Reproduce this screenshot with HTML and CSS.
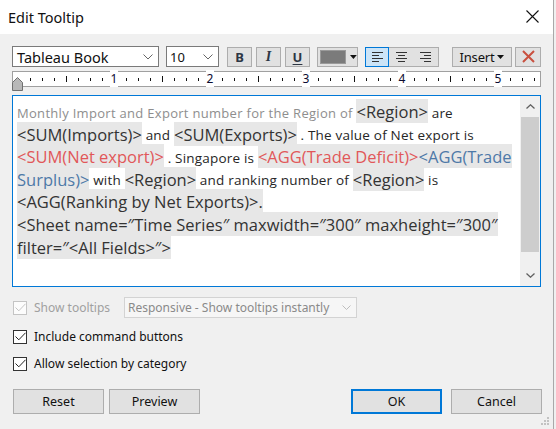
FILE: index.html
```html
<!DOCTYPE html>
<html>
<head>
<meta charset="utf-8">
<link rel="stylesheet" href="styles.css">
</head>
<body>
<div class="window">
  <header class="titlebar">
    <span class="title">Edit Tooltip</span>
    <svg class="close" width="13" height="13" viewBox="0 0 13 13"><path d="M0.5 0.5L12.5 12.5M12.5 0.5L0.5 12.5" stroke="#111" stroke-width="1.1" fill="none"/></svg>
  </header>
  <main class="content">
    <div class="toolbar">
      <div class="select font-select"><span>Tableau Book</span><svg width="10" height="6" viewBox="0 0 10 6"><path d="M0.5 0.5L5 5L9.5 0.5" stroke="#666" fill="none"/></svg></div>
      <div class="select size-select"><span>10</span><svg width="10" height="6" viewBox="0 0 10 6"><path d="M0.5 0.5L5 5L9.5 0.5" stroke="#666" fill="none"/></svg></div>
      <div class="btn fmt bold">B</div>
      <div class="btn fmt ital">I</div>
      <div class="btn fmt under">U</div>
      <div class="btn colorbtn"><span class="swatch"></span><svg width="7" height="4" viewBox="0 0 7 4"><path d="M0 0H7L3.5 4Z" fill="#111"/></svg></div>
      <div class="align-group">
        <div class="al active"><svg width="11" height="10" viewBox="0 0 11 10"><path d="M0 0.5H11M0 3.5H7M0 6.5H11M0 9.5H7" stroke="#333"/></svg></div>
        <div class="al"><svg width="11" height="10" viewBox="0 0 11 10"><path d="M0 0.5H11M2 3.5H9M0 6.5H11M2 9.5H9" stroke="#333"/></svg></div>
        <div class="al"><svg width="11" height="10" viewBox="0 0 11 10"><path d="M0 0.5H11M4 3.5H11M0 6.5H11M4 9.5H11" stroke="#333"/></svg></div>
      </div>
      <div class="btn insert"><span>Insert</span><svg width="7" height="4" viewBox="0 0 7 4"><path d="M0 0H7L3.5 4Z" fill="#111"/></svg></div>
      <div class="btn clear"><svg width="13" height="13" viewBox="0 0 13 13"><path d="M1 1L12 12M12 1L1 12" stroke="#c9503f" stroke-width="2" fill="none"/></svg></div>
    </div>
    <div class="ruler">
      <span class="num"><i>1</i></span><span class="num"><i>2</i></span><span class="num"><i>3</i></span><span class="num"><i>4</i></span><span class="num"><i>5</i></span>
      <svg class="rthumb" width="11" height="14" viewBox="0 0 11 14"><path d="M0.5 5.5L5.5 0.5L10.5 5.5V13.5H0.5Z" fill="#b8b8b8" stroke="#707070"/></svg>
    </div>
    <div class="editor">
      <p class="tt"><span class="g">Monthly Import and Export number for the Region of </span><span class="f">&lt;Region&gt;</span><span class="n"> are</span><br><span class="f">&lt;SUM(Imports)&gt;</span><span class="n"> and </span><span class="f">&lt;SUM(Exports)&gt;</span><span class="n"> . The value of Net export is</span><br><span class="f red">&lt;SUM(Net export)&gt;</span><span class="n"> . Singapore is </span><span class="f red">&lt;AGG(Trade Deficit)&gt;</span><span class="f blue">&lt;AGG(Trade<br>Surplus)&gt;</span><span class="n"> with </span><span class="f">&lt;Region&gt;</span><span class="n"> and ranking number of </span><span class="f">&lt;Region&gt;</span><span class="n"> is</span><br><span class="f">&lt;AGG(Ranking by Net Exports)&gt;.</span><br><span class="f">&lt;Sheet name=″Time Series″ maxwidth=″300″ maxheight=″300″<br>filter=″&lt;All Fields&gt;″&gt;</span></p>
      <div class="scrollbar">
        <div class="sarrow"><svg width="9" height="5" viewBox="0 0 9 5"><path d="M0.5 4.5L4.5 0.8L8.5 4.5" stroke="#606060" stroke-width="1.3" fill="none"/></svg></div>
        <div class="sthumb"></div>
        <div class="strack"></div>
        <div class="sarrow"><svg width="9" height="5" viewBox="0 0 9 5"><path d="M0.5 0.5L4.5 4.2L8.5 0.5" stroke="#606060" stroke-width="1.3" fill="none"/></svg></div>
      </div>
    </div>
    <div class="opt-row show-row">
      <span class="cb disabled"><svg width="11" height="9" viewBox="0 0 11 9"><path d="M0.5 4.5L3.8 7.8L10.5 0.8" stroke="#c4c4c4" fill="none"/></svg></span>
      <span class="label disabled-label">Show tooltips</span>
      <div class="dd"><span>Responsive - Show tooltips instantly</span><svg width="9" height="5" viewBox="0 0 9 5"><path d="M0.5 0.5L4.5 4.5L8.5 0.5" stroke="#bdbdbd" fill="none"/></svg></div>
    </div>
    <div class="opt-row include-row">
      <span class="cb"><svg width="11" height="9" viewBox="0 0 11 9"><path d="M0.5 4.5L3.8 7.8L10.5 0.8" stroke="#222" fill="none"/></svg></span>
      <span class="label">Include command buttons</span>
    </div>
    <div class="opt-row allow-row">
      <span class="cb"><svg width="11" height="9" viewBox="0 0 11 9"><path d="M0.5 4.5L3.8 7.8L10.5 0.8" stroke="#222" fill="none"/></svg></span>
      <span class="label">Allow selection by category</span>
    </div>
    <div class="buttons">
      <div class="btn-group">
        <button class="dbtn">Reset</button>
        <button class="dbtn">Preview</button>
      </div>
      <div class="btn-group right">
        <button class="dbtn primary">OK</button>
        <button class="dbtn">Cancel</button>
      </div>
    </div>
  </main>
  <svg class="grip" width="9" height="9" viewBox="0 0 9 9"><g fill="#c2c2c2"><rect x="6" y="0" width="2" height="2"/><rect x="3" y="3" width="2" height="2"/><rect x="6" y="3" width="2" height="2"/><rect x="0" y="6" width="2" height="2"/><rect x="3" y="6" width="2" height="2"/><rect x="6" y="6" width="2" height="2"/></g></svg>
</div>
</body>
</html>
```

FILE: styles.css
```css
* { box-sizing: border-box; }
html, body {
  margin: 0;
  padding: 0;
  background: #f0f0f0;
  width: 556px;
  height: 429px;
  overflow: hidden;
}
body {
  font-family: "Noto Sans", "Open Sans", sans-serif;
  color: #000;
}
.window {
  position: relative;
  width: 554px;
  height: 429px;
  border-right: 1px solid #a9a9a9;
  background: #f0f0f0;
}
.titlebar {
  height: 34px;
  background: #fff;
  display: flex;
  align-items: center;
  justify-content: space-between;
  padding: 0 14px 0 8px;
}
.title {
  font-size: 14.5px;
  color: #111;
  margin-top: -1px;
}
.close { display: block; margin-top: -2px; }

.content {
  padding: 12px 0 0 12px;
  width: 541px;
}

/* toolbar */
.toolbar {
  display: flex;
  align-items: center;
  height: 21px;
}
.select {
  height: 21px;
  border: 1px solid #7a7a7a;
  background: #fff;
  display: flex;
  align-items: center;
  justify-content: space-between;
  color: #111;
}
.font-select {
  width: 147px;
  padding: 0 5px 0 4px;
  font-size: 14.5px;
}
.size-select {
  width: 53px;
  margin-left: 7px;
  padding: 0 5px 0 3px;
  font-size: 13px;
}
.select svg { display: block; }
.btn {
  height: 20px;
  border: 1px solid #adadad;
  background: #e1e1e1;
  display: flex;
  align-items: center;
  justify-content: center;
  color: #2d3644;
}
.fmt {
  width: 25px;
  margin-left: 4px;
  font-size: 13px;
  font-weight: bold;
}
.bold { margin-left: 8px; }
.ital {
  font-family: "Liberation Serif", serif;
  font-style: italic;
  font-size: 14px;
}
.under { text-decoration: underline; text-underline-offset: 2px; }
.colorbtn {
  width: 41px;
  margin-left: 7px;
  justify-content: flex-start;
  padding-left: 2px;
  gap: 4px;
}
.swatch {
  width: 27px;
  height: 14px;
  background: #7b7b7b;
  border: 1px solid #9a9a9a;
}
.align-group {
  margin-left: 7px;
  width: 74px;
  height: 20px;
  display: flex;
  border: 1px solid #adadad;
  background: #e1e1e1;
}
.al {
  flex: 1;
  display: flex;
  align-items: center;
  justify-content: center;
}
.al.active {
  background: #cce4f7;
  outline: 1px solid #0078d7;
  outline-offset: -1px;
  margin: -1px 0 -1px -1px;
}
.al svg { display: block; }
.insert {
  width: 60px;
  margin-left: 13px;
  font-size: 13px;
  gap: 3px;
  color: #111;
  letter-spacing: -0.2px;
}
.clear {
  width: 26px;
  margin-left: 3px;
}

/* ruler */
.ruler {
  position: relative;
  margin-top: 4px;
  width: 529px;
  height: 16px;
  border: 1px solid #a0a0a0;
  background-color: #fff;
  background-image:
    repeating-linear-gradient(to right, #111 0 1px, transparent 1px 96px),
    repeating-linear-gradient(to right, #111 0 1px, transparent 1px 12px);
  background-size: 100% 6px, 100% 3px;
  background-position: 53px 4px, 5px 6px;
  background-repeat: no-repeat;
  display: flex;
  padding-left: 53px;
}
.num {
  width: 96px;
  flex: none;
  text-align: center;
  font-size: 12px;
  line-height: 14px;
  color: #0b0b30;
}
.num i {
  font-style: normal;
  background: #fff;
  padding: 0 1px;
}
.rthumb {
  position: absolute;
  left: -1px;
  top: 5px;
}

/* editor */
.editor {
  margin-top: 8px;
  width: 529px;
  height: 192px;
  border: 1px solid #0078d7;
  background: #fff;
  display: flex;
}
.tt {
  flex: 1;
  margin: 0;
  padding: 4.5px 0 0 4px;
  font-family: "Open Sans", "Noto Sans", sans-serif;
  line-height: 22.6px;
  white-space: nowrap;
  overflow: hidden;
  color: #2b2b2b;
}
.g {
  font-size: 13px;
  letter-spacing: 0.3px;
  color: #8e8e8e;
  line-height: 1;
}
.n {
  font-size: 13.5px;
  letter-spacing: 0.2px;
  color: #262626;
  line-height: 1;
}
.f {
  font-size: 16.5px;
  color: #333;
  background: #e7e7e7;
  padding: 0.5px 0;
}
.f.red { color: #e15759; }
.f.blue { color: #4e79a7; }
.scrollbar {
  width: 20px;
  flex: none;
  background: #f0f0f0;
  display: flex;
  flex-direction: column;
}
.sarrow {
  height: 21px;
  display: flex;
  align-items: center;
  justify-content: center;
}
.sthumb {
  height: 135px;
  margin: 0 1px;
  background: #cdcdcd;
}
.strack { flex: 1; }

/* options */
.opt-row {
  display: flex;
  align-items: center;
  height: 21px;
  font-size: 12px;
}
.show-row { margin-top: 10px; }
.include-row { margin-top: 8px; }
.allow-row { margin-top: 6px; }
.cb {
  width: 14px;
  height: 14px;
  margin-left: 1px;
  border: 1px solid #333;
  background: #fff;
  display: flex;
  align-items: center;
  justify-content: center;
}
.cb.disabled { border-color: #c4c4c4; background: #fcfcfc; }
.label {
  margin-left: 7px;
  color: #111;
}
.disabled-label { color: #a0a0a0; width: 83px; }
.dd {
  margin-left: 7px;
  width: 233px;
  height: 21px;
  border: 1px solid #d3d3d3;
  background: #f6f6f6;
  display: flex;
  align-items: center;
  justify-content: space-between;
  padding: 0 5px 0 3px;
  color: #8a8a8a;
}
.dd svg { display: block; }

/* buttons */
.buttons {
  margin-top: 15px;
  display: flex;
  justify-content: space-between;
  width: 529px;
  margin-left: 1px;
}
.btn-group { display: flex; gap: 5px; }
.btn-group.right { gap: 9px; }
.dbtn {
  width: 91px;
  height: 25px;
  border: 1px solid #adadad;
  background: #e1e1e1;
  font-family: "Noto Sans", sans-serif;
  font-size: 12.5px;
  color: #111;
  padding: 0;
}
.dbtn.primary {
  border: 2px solid #0078d7;
}
.grip {
  position: absolute;
  right: 3px;
  bottom: 3px;
}
```
